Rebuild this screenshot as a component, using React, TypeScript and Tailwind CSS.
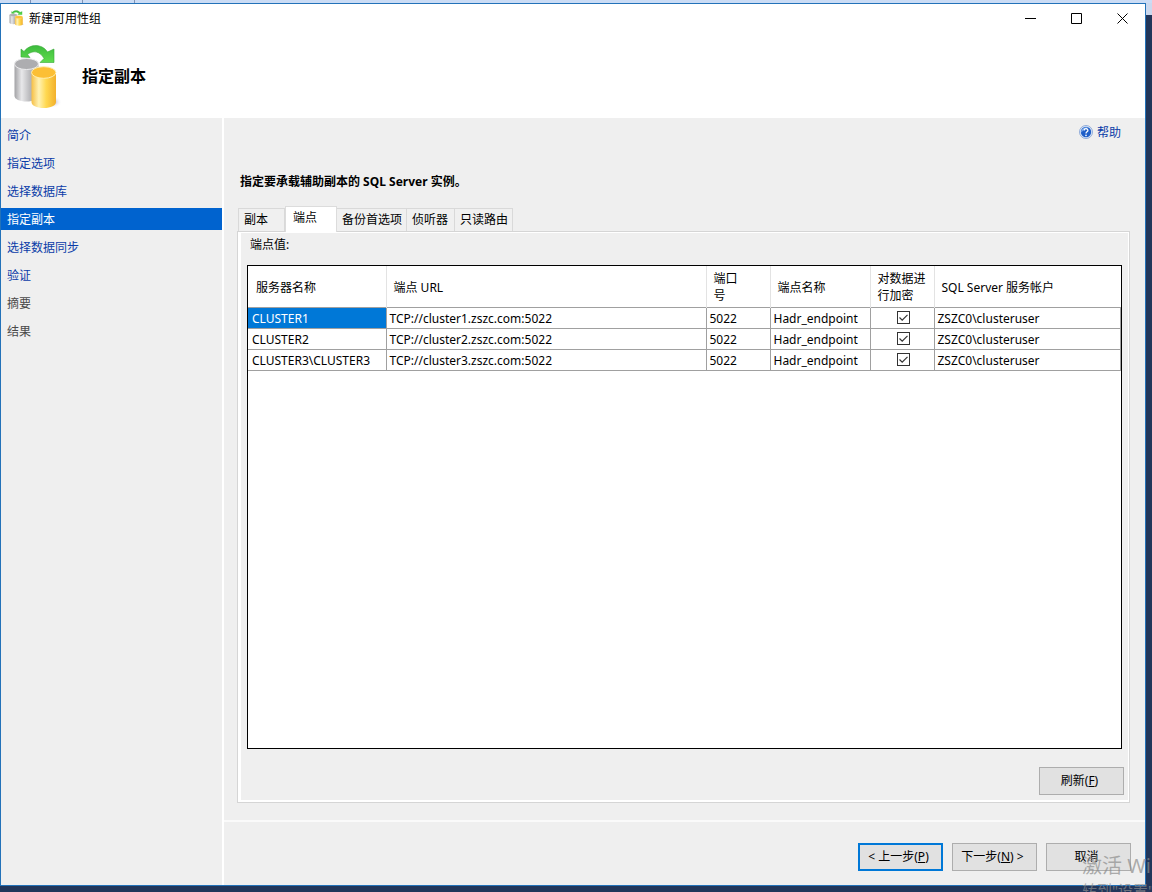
import { useState } from "react";

type StepState = "done" | "current" | "pending";

const steps: { label: string; state: StepState }[] = [
  { label: "简介", state: "done" },
  { label: "指定选项", state: "done" },
  { label: "选择数据库", state: "done" },
  { label: "指定副本", state: "current" },
  { label: "选择数据同步", state: "done" },
  { label: "验证", state: "done" },
  { label: "摘要", state: "pending" },
  { label: "结果", state: "pending" },
];

const stepClass: Record<StepState, string> = {
  done: "text-[#0a3ca8]",
  current: "bg-[#0063cf] text-white",
  pending: "text-[#4a4a4a]",
};

const tabs = [
  { label: "副本", width: "w-[47px]" },
  { label: "端点", width: "w-[52px]" },
  { label: "备份首选项", width: "w-[70px]" },
  { label: "侦听器", width: "w-[48px]" },
  { label: "只读路由", width: "w-[58px]" },
];

const columns = [
  { label: "服务器名称", width: "w-[138px]" },
  { label: "端点 URL", width: "w-[320px]" },
  { label: "端口\n号", width: "w-[64px]" },
  { label: "端点名称", width: "w-[100px]" },
  { label: "对数据进\n行加密", width: "w-[64px]" },
  { label: "SQL Server 服务帐户", width: "" },
];

const endpoints = [
  { server: "CLUSTER1", url: "TCP://cluster1.zszc.com:5022" },
  { server: "CLUSTER2", url: "TCP://cluster2.zszc.com:5022" },
  { server: "CLUSTER3\\CLUSTER3", url: "TCP://cluster3.zszc.com:5022" },
].map((e) => ({ ...e, port: "5022", name: "Hadr_endpoint", account: "ZSZC0\\clusteruser" }));

function ReplicaIcon({ id, className }: { id: string; className: string }) {
  return (
    <svg viewBox="0 0 50 66" preserveAspectRatio="none" className={className} aria-hidden="true">
      <defs>
        <linearGradient id={`${id}-grey`} x1="0" x2="1">
          <stop offset="0" stopColor="#a2a2a5" />
          <stop offset="0.3" stopColor="#e8e8ea" />
          <stop offset="0.65" stopColor="#b8b8bb" />
          <stop offset="1" stopColor="#a6a6a9" />
        </linearGradient>
        <linearGradient id={`${id}-gold`} x1="0" x2="1">
          <stop offset="0" stopColor="#f6bf45" />
          <stop offset="0.3" stopColor="#fff2b4" />
          <stop offset="0.6" stopColor="#ffd850" />
          <stop offset="1" stopColor="#f2b02c" />
        </linearGradient>
        <linearGradient id={`${id}-green`} x1="0" x2="0" y1="0" y2="1">
          <stop offset="0" stopColor="#3dbb3d" />
          <stop offset="1" stopColor="#5fdc4e" />
        </linearGradient>
        <radialGradient id={`${id}-shade`}>
          <stop offset="0" stopColor="#a9a3c4" />
          <stop offset="1" stopColor="#ffffff" stopOpacity="0" />
        </radialGradient>
      </defs>
      <ellipse cx="40" cy="59" rx="9" ry="6" fill={`url(#${id}-shade)`} />
      <path d="M1.500 21v32c0 3 5 5.500 12 5.500s12-2.500 12-5.500V21z" fill={`url(#${id}-grey)`} />
      <ellipse cx="13.500" cy="21" rx="12" ry="5.500" fill="#adadb0" stroke="#ececee" strokeWidth="1" />
      <path d="M18.500 30v29c0 3.500 5 6 12.200 6S43 62.500 43 59V30z" fill={`url(#${id}-gold)`} />
      <ellipse cx="30.700" cy="29.500" rx="12.200" ry="5.800" fill="#fcbf35" stroke="#ffeeb0" strokeWidth="1" />
      <path
        d="M8 6l3 2.500C17 .5 29 .5 34.500 9l6.500-3v13.500H27l4-4C27 8 20 7 14.500 11.500l2.500 3L8 14z"
        fill={`url(#${id}-green)`}
        stroke="#38a838"
        strokeWidth="0.6"
      />
    </svg>
  );
}

function HelpIcon() {
  return (
    <svg viewBox="0 0 14 14" className="h-3.5 w-3.5" aria-hidden="true">
      <circle cx="7" cy="7" r="6.500" fill="#dfe9f8" stroke="#7a9ad2" strokeWidth="0.8" />
      <circle cx="7" cy="7" r="5.200" fill="#1f5fc8" />
      <path d="M2.200 6a5 5 0 0 1 7.300-3C7 3.500 4.500 4.500 2.500 7.500z" fill="#7aa9ea" />
      <path d="M5.200 5.500c0-2.500 3.800-2.300 3.700 0C8.900 6.800 7 6.900 7 8.400" fill="none" stroke="#fff" strokeWidth="1.300" />
      <circle cx="7" cy="10.300" r="0.850" fill="#fff" />
    </svg>
  );
}

const captionButton = "flex h-7 w-[46px] items-center justify-center hover:bg-[#e5e5e5]";

function TitleBar() {
  return (
    <header className="bg-white">
      <div className="flex h-7 items-center">
        <ReplicaIcon id="small" className="ml-2 h-4 w-4" />
        <span className="ml-1 flex-1 pt-0.5">新建可用性组</span>
        <button type="button" aria-label="最小化" className={captionButton}>
          <svg viewBox="0 0 11 11" className="h-[11px] w-[11px]" fill="none" stroke="#000">
            <path d="M0 5.500h11" />
          </svg>
        </button>
        <button type="button" aria-label="最大化" className={captionButton}>
          <svg viewBox="0 0 11 11" className="h-[11px] w-[11px]" fill="none" stroke="#000">
            <path d="M.5.5h10v10H.5z" />
          </svg>
        </button>
        <button type="button" aria-label="关闭" className={captionButton}>
          <svg viewBox="0 0 11 11" className="h-[11px] w-[11px]" fill="none" stroke="#000">
            <path d="M.5.5l10 10M10.500.5l-10 10" />
          </svg>
        </button>
      </div>
      <div className="flex h-[86px] items-center gap-[19px] pt-0.5 pl-3">
        <ReplicaIcon id="large" className="h-[66px] w-[50px]" />
        <h1 className="text-base font-bold">指定副本</h1>
      </div>
    </header>
  );
}

const dialogButton = "h-7 w-[85px] bg-[#e1e1e1] pr-1 text-center whitespace-pre hover:bg-[#e5f1fb]";

export default function App() {
  const [activeTab, setActiveTab] = useState("端点");
  const [encrypted, setEncrypted] = useState([true, true, true]);

  const toggle = (row: number) => setEncrypted((prev) => prev.map((v, i) => (i === row ? !v : v)));

  return (
    <div className="relative flex min-h-screen flex-col overflow-hidden bg-[#22365a] font-['Noto_Sans','Noto_Sans_CJK_SC',sans-serif] text-xs leading-4 text-black">
      {/* Toolbar edge of the window behind */}
      <div className="flex h-[3px] shrink-0 bg-[#cbdcf5]">
        <span className="w-[31px] border-r border-[#7f93b5]" />
        <span className="w-[52px] border-r border-[#7f93b5]" />
        <span className="w-[52px] border-r border-[#7f93b5]" />
      </div>

      <div className="flex flex-1 pb-1.5">
        <div className="flex min-w-0 flex-1 flex-col border border-[#2372b9] bg-[#efefef]">
          <TitleBar />

          <div className="flex flex-1">
            {/* Wizard steps */}
            <nav className="w-[223px] shrink-0 border-r-2 border-white pt-1.5">
              <ul className="flex flex-col gap-1.5">
                {steps.map((step) => (
                  <li key={step.label} className={`${stepClass[step.state]} flex h-[22px] items-center pt-0.5 pl-1.5`}>
                    {step.state === "pending" ? <span>{step.label}</span> : <a href="#">{step.label}</a>}
                  </li>
                ))}
              </ul>
            </nav>

            <div className="flex min-w-0 flex-1 flex-col">
              <main className="flex flex-1 flex-col pr-[15px] pb-[17px] pl-[13px]">
                <div className="flex h-7 items-center justify-end pr-[9px]">
                  <a href="#" className="flex items-center gap-1 text-[#0a3ca8]">
                    <HelpIcon />
                    <span className="pt-0.5">帮助</span>
                  </a>
                </div>

                <h2 className="mt-[26px] h-5 pl-[3px] leading-5 font-bold">指定要承载辅助副本的 SQL Server 实例。</h2>

                <div role="tablist" className="mt-3.5 flex h-[25px] items-end pl-px">
                  {tabs.map((tab) => (
                    <button
                      key={tab.label}
                      type="button"
                      role="tab"
                      aria-selected={tab.label === activeTab}
                      onClick={() => setActiveTab(tab.label)}
                      className={`${tab.width} shrink-0 text-left whitespace-nowrap ${
                        tab.label === activeTab
                          ? "relative -mb-px h-[26px] border border-b-0 border-[#dcdcdc] bg-white pb-1 pl-[7px]"
                          : "h-[23px] border-t border-r border-[#d9d9d9] bg-[#f0f0f0] pl-[5px] first:border-l"
                      }`}
                    >
                      {tab.label}
                    </button>
                  ))}
                </div>

                <section role="tabpanel" className="flex flex-1 flex-col border border-[#d5d5d5]">
                  <div className="flex flex-1 flex-col border-t border-r border-b-2 border-l-[3px] border-white pr-1 pb-[5px] pl-1.5">
                    <p className="h-[22px] pt-px pl-[3px] leading-[22px]">端点值:</p>

                    <div className="mt-2.5 mr-0.5 flex-1 border border-black bg-white">
                      <table className="w-full table-fixed border-collapse text-left">
                        <thead>
                          <tr className="h-[41px]">
                            {columns.map((col) => (
                              <th
                                key={col.label}
                                scope="col"
                                className={`${col.width} border-r border-[#e3e3e3] pt-0.5 pr-0 pb-0 pl-[7px] leading-[17px] font-normal whitespace-pre-line first:pl-2 last:border-r-0`}
                              >
                                {col.label}
                              </th>
                            ))}
                          </tr>
                        </thead>
                        <tbody>
                          {endpoints.map((row, i) => (
                            <tr
                              key={row.server}
                              className="h-[21px] border-y border-[#a0a0a0] whitespace-nowrap [&>td]:border-r [&>td]:border-[#a0a0a0] [&>td]:pt-0.5 [&>td]:pl-[3px] [&>td:first-child]:pl-1"
                            >
                              <td className={i === 0 ? "bg-[#0078d7] text-white" : ""}>{row.server}</td>
                              <td>{row.url}</td>
                              <td>{row.port}</td>
                              <td>{row.name}</td>
                              <td>
                                <label className="mx-auto -mt-0.5 grid h-[13px] w-[13px]">
                                  <input
                                    type="checkbox"
                                    aria-label={`${row.server} 加密`}
                                    checked={encrypted[i]}
                                    onChange={() => toggle(i)}
                                    className="peer col-start-1 row-start-1 h-[13px] w-[13px] appearance-none border border-[#333] bg-white"
                                  />
                                  <svg
                                    viewBox="0 0 13 13"
                                    className="pointer-events-none invisible col-start-1 row-start-1 h-[13px] w-[13px] peer-checked:visible"
                                    fill="none"
                                    stroke="#333"
                                    strokeWidth="1.200"
                                  >
                                    <path d="M2.500 6.500l2.700 2.700 5.300-5.400" />
                                  </svg>
                                </label>
                              </td>
                              <td>{row.account}</td>
                            </tr>
                          ))}
                        </tbody>
                      </table>
                    </div>

                    <button type="button" className={`${dialogButton} mt-[18px] self-end border border-[#adadad]`}>
                      刷新(<u>F</u>)
                    </button>
                  </div>
                </section>
              </main>

              <footer className="flex justify-end gap-[9px] border-t-2 border-[#fafafa] pt-[21px] pr-3.5 pb-3.5">
                <button type="button" className={`${dialogButton} border-2 border-[#0078d7]`}>
                  &lt; 上一步(<u>P</u>)
                </button>
                <button type="button" className={`${dialogButton} border border-[#adadad]`}>
                  下一步(<u>N</u>) &gt;
                </button>
                <button type="button" className={`${dialogButton} border border-[#adadad]`}>
                  取消
                </button>
              </footer>
            </div>
          </div>
        </div>

        {/* Desktop sliver to the right */}
        <div className="w-1.5 shrink-0">
          <div className="h-3 bg-[#cbd8ee]" />
        </div>
      </div>

      {/* Activation watermark running off the screen corner */}
      <div className="pointer-events-none absolute right-0 bottom-0 h-10 w-[70px] overflow-hidden whitespace-nowrap text-[#8c8c8c]/70">
        <p className="text-xl leading-7">激活 Windows</p>
        <p className="text-[15px] leading-5">转到"设置"以激活 Windows。</p>
      </div>
    </div>
  );
}
